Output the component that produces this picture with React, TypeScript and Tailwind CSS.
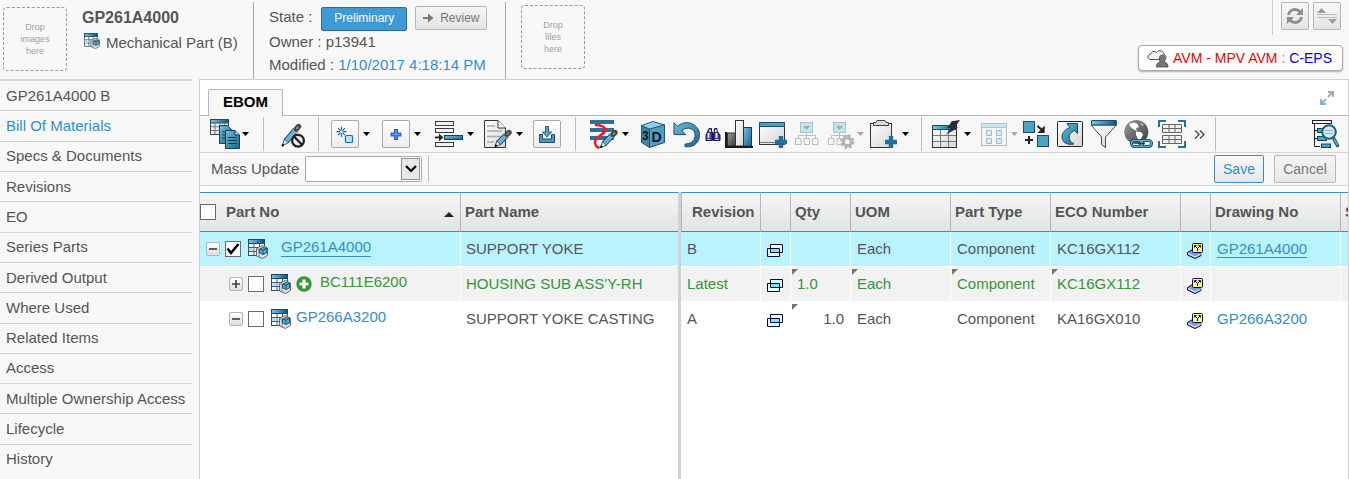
import React from "react";

type Kids = { children?: React.ReactNode };

function Defs() {
  return (
    <svg className="absolute h-0 w-0" aria-hidden="true">
      <defs>
        <linearGradient id="blue" x1="0" y1="0" x2="1" y2="1">
          <stop offset="0" stopColor="#6fc0e2" />
          <stop offset="1" stopColor="#1f6187" />
        </linearGradient>
        <linearGradient id="head" x1="0" y1="0" x2="1" y2="0">
          <stop offset="0" stopColor="#7cc8e8" />
          <stop offset="1" stopColor="#0d5378" />
        </linearGradient>
        <linearGradient id="paper" x1="0" y1="0" x2="1" y2="1">
          <stop offset="0" stopColor="#ffffff" />
          <stop offset="1" stopColor="#d6d6d6" />
        </linearGradient>
        <linearGradient id="dark" x1="0" y1="0" x2="1" y2="1">
          <stop offset="0" stopColor="#9a9a9a" />
          <stop offset="1" stopColor="#3c3c3c" />
        </linearGradient>
      </defs>
    </svg>
  );
}

function Glyph({ children }: Kids) {
  return (
    <svg viewBox="0 0 28 28" className="block h-7 w-7 overflow-visible" fill="none" aria-hidden="true">
      {children}
    </svg>
  );
}

function Pencil({ x1, y1, x2, y2 }: { x1: number; y1: number; x2: number; y2: number }) {
  const dx = x2 - x1;
  const dy = y2 - y1;
  const at = (t: number) => `${x1 + dx * t} ${y1 + dy * t}`;
  return (
    <g>
      <path
        d={`M${x1} ${y1}L${x1 + dx * 0.28 - 2} ${y1 + dy * 0.28 - 2}L${x1 + dx * 0.28 + 2} ${y1 + dy * 0.28 + 2}Z`}
        fill="#d9e4ea"
        stroke="#1c2f3a"
        strokeWidth="0.800"
      />
      <path d={`M${at(0.25)}L${at(0.82)}`} stroke="#1b4357" strokeWidth="6" />
      <path d={`M${at(0.27)}L${at(0.74)}`} stroke="#65b4da" strokeWidth="4.200" />
      <path d={`M${at(0.74)}L${at(0.84)}`} stroke="#eeeeee" strokeWidth="5" />
      <path d={`M${at(0.86)}L${at(1)}`} stroke="#4a4446" strokeWidth="5.400" strokeLinecap="round" />
      <path d={`M${at(0.9)}L${at(0.96)}`} stroke="#8d8587" strokeWidth="2" strokeLinecap="round" />
      <circle cx={x1 + 0.8} cy={y1 - 0.8} r="1.200" fill="#111" />
    </g>
  );
}

function Plus({ x, y }: { x: number; y: number }) {
  return <path d={`M${x - 6} ${y}H${x + 6}M${x} ${y - 6}V${y + 6}`} stroke="#23709b" strokeWidth="4.400" />;
}

function CopyTables() {
  return (
    <Glyph>
      <rect x="0.500" y="-0.500" width="18" height="15" fill="url(#paper)" stroke="#444" />
      <rect x="0.500" y="-0.500" width="18" height="3.500" fill="url(#head)" stroke="#2a4a5c" />
      <path d="M5 3V14M10 3V14M14.500 3V14M1 6.700H18M1 10.500H18" stroke="#777" />
      <path d="M9.500 5.500H17.500L21.500 9.500V23.500H9.500Z" fill="url(#blue)" stroke="#134560" />
      <path d="M12 12H18M12 15H18M12 18H18" stroke="#134560" />
      <path d="M15.500 10.500H25L29.500 15V28.500H15.500Z" fill="url(#blue)" stroke="#0d3c55" />
      <path d="M25 10.500V15H29.500" fill="#a5dcf2" stroke="#0d3c55" />
      <path d="M18 17.500H26.500M18 20.500H26.500M18 23.500H26.500" stroke="#0b3146" />
    </Glyph>
  );
}

function PencilOff() {
  return (
    <Glyph>
      <Pencil x1={2} y1={26} x2={18.5} y2={6.5} />
      <circle cx="18" cy="20.700" r="5.900" fill="#eee" stroke="#222" strokeWidth="2.300" />
      <path d="M14 16.500L22 24.700" stroke="#222" strokeWidth="2.300" />
    </Glyph>
  );
}

function NewItem() {
  return (
    <Glyph>
      <path d="M10.500 6.500V17M5.300 11.700H15.700M7 8.200L14 15.200M14 8.200L7 15.200" stroke="#1a6bb0" strokeWidth="1.200" />
      <circle cx="10.500" cy="11.700" r="1.500" fill="#d9eefa" />
      <rect x="14.500" y="15.500" width="7" height="7" rx="1" fill="#b5e4f7" stroke="#1a6bb0" strokeWidth="1.200" />
    </Glyph>
  );
}

function AddItem() {
  return (
    <Glyph>
      <path d="M8.500 14.500H19.500M14 9V20" stroke="#2564c0" strokeWidth="4" />
      <path d="M9.500 14.500H18.500M14 10V19" stroke="#5d95e0" strokeWidth="1.600" />
    </Glyph>
  );
}

function InsertRow() {
  return (
    <Glyph>
      <g fill="#f2f2f2" stroke="#3a3a3a">
        <rect x="0.500" y="1.500" width="18" height="4" />
        <rect x="0.500" y="8.500" width="18" height="4" />
        <rect x="0.500" y="22.500" width="18" height="4" />
      </g>
      <path d="M0 17.400H5" stroke="#222" strokeWidth="1.800" />
      <path d="M4 13.600L8.300 17.400L4 21.200Z" fill="#222" />
      <rect x="9.500" y="15.500" width="18" height="4" fill="url(#blue)" stroke="#12415a" />
    </Glyph>
  );
}

function EditNote() {
  return (
    <Glyph>
      <path d="M0.500 0.500H14L21.500 8V27.500H0.500Z" fill="url(#paper)" stroke="#333" />
      <path d="M14 0.500V8H21.500" fill="#fff" stroke="#333" />
      <path d="M3 6H11M3 11H18M3 16.500H17M3 22H10" stroke="#aaa" strokeWidth="1.700" />
      <Pencil x1={11} y1={26.5} x2={25} y2={12.5} />
    </Glyph>
  );
}

function Download() {
  return (
    <Glyph>
      <path d="M6.500 14.500H9.500V19H18.500V14.500H21.500V22.500H6.500Z" fill="#5197b8" stroke="#154e70" />
      <path d="M12.500 6.500H15.500V12H18.500L14 17L9.500 12H12.500Z" fill="#5ba5c9" stroke="#154e70" strokeWidth="0.900" />
    </Glyph>
  );
}

function Redline() {
  return (
    <Glyph>
      <path d="M0 2H24M0 10H24M0 18H24" stroke="#2d7296" strokeWidth="4" />
      <path d="M5 5C12 5 16 7 14.800 11C13.500 15 5 17 5 22C5 26 6.500 27 9.500 28" stroke="#f8171b" strokeWidth="2.600" />
      <Pencil x1={10.5} y1={27.5} x2={25} y2={12.5} />
    </Glyph>
  );
}

function Cube3D() {
  return (
    <Glyph>
      <path d="M13.700 1.500L2.500 5.500V22.500L10.500 27.500L25.500 22.500V4.800Z" fill="#3b86a8" />
      <path d="M13.700 1.500L2.500 5.500L10.500 9L25.500 4.800Z" fill="#8fd0ea" />
      <path d="M10.500 9L25.500 4.800V22.500L10.500 27.500Z" fill="#4da0c4" />
      <path d="M13.700 1.500L2.500 5.500V22.500L10.500 27.500L25.500 22.500V4.800ZM2.500 5.500L10.500 9V27.500M10.500 9L25.500 4.800" stroke="#123f56" strokeWidth="0.800" />
      <text x="3" y="20" fontSize="12" fontWeight="bold" fill="#111">3</text>
      <text x="12.500" y="22" fontSize="14" fontWeight="bold" fill="#111">D</text>
    </Glyph>
  );
}

function Undo() {
  return (
    <Glyph>
      <path
        d="M1 2.800L4.500 6.300C9 2.500 14.500 1.500 19.500 4C26 7.300 28 14 25.500 20C23 25.500 18 27.300 12 26.700V24C17.500 24 21.500 21 22 16.500C22.500 11.500 19.500 8.500 15.500 8.200C12.500 8 10.500 9 9 10.800L12.800 14.600H1Z"
        fill="url(#blue)"
        stroke="#174f6c"
      />
    </Glyph>
  );
}

function Binoculars() {
  return (
    <svg viewBox="0 0 16 28" className="block h-7 w-4" fill="none" aria-hidden="true">
      <path d="M4 8.500H6.500V11L7.500 13V20.500H1V15L3 11ZM9.500 8.500H12V11L15 15V20.500H8.500V13L9.500 11Z" fill="#3b3b86" stroke="#15155c" />
      <path d="M5 9.500V12M10.800 9.500V12" stroke="#fff" strokeWidth="1.500" />
      <path d="M3.500 13V18M11.500 13V18" stroke="#e8e8f4" strokeWidth="2" />
      <path d="M2 19.500H5.500M10 19.500H14" stroke="#c6c6e8" />
    </svg>
  );
}

function BarChart() {
  return (
    <Glyph>
      <rect x="2.500" y="13" width="8" height="13" fill="url(#dark)" stroke="#333" />
      <rect x="10.500" y="0.500" width="8" height="25.500" fill="url(#paper)" stroke="#333" />
      <rect x="18.500" y="7.500" width="8" height="18.500" fill="url(#blue)" stroke="#123f56" />
      <path d="M1 12V27H28" stroke="#1c1c1c" strokeWidth="2" />
    </Glyph>
  );
}

function WindowAdd() {
  return (
    <Glyph>
      <rect x="0.500" y="2.500" width="25" height="22" fill="url(#paper)" stroke="#333" />
      <rect x="0.500" y="2.500" width="25" height="4" fill="#4c9fc5" stroke="#174f6c" />
      <path d="M1 22.500H16" stroke="#777" />
      <Plus x={22} y={22} />
    </Glyph>
  );
}

function Hierarchy() {
  return (
    <Glyph>
      <rect x="7.500" y="2.500" width="12" height="10" fill="#c9e3ee" stroke="#a9c3cf" />
      <path d="M10 6H17L13.500 10Z" fill="#8eb0bf" />
      <path d="M13.500 12.500V18.500M5.500 18.500V15.500H22.500V18.500" stroke="#bdbdbd" />
      <path d="M2.500 18.500H8V24.500H2.500ZM11 18.500H16.500V24.500H11ZM19.500 18.500H25V24.500H19.500Z" fill="#f5f5f5" stroke="#bdbdbd" />
    </Glyph>
  );
}

function HierarchyGear() {
  return (
    <Glyph>
      <rect x="8.500" y="2.500" width="12" height="10" fill="#c9e3ee" stroke="#a9c3cf" />
      <path d="M11 6H18L14.500 10Z" fill="#8eb0bf" />
      <path d="M14.500 12.500V18M6.500 18V15.500H23" stroke="#bdbdbd" />
      <path d="M3.500 18.500H9V24.500H3.500ZM12 18.500H17.500V24.500H12Z" fill="#f5f5f5" stroke="#bdbdbd" />
      <circle cx="22.300" cy="21.700" r="6" stroke="#b2b2b2" strokeWidth="2.500" strokeDasharray="2.600 2.110" />
      <circle cx="22.300" cy="21.700" r="4" fill="#f5f5f5" stroke="#b2b2b2" strokeWidth="3" />
    </Glyph>
  );
}

function ClipboardAdd() {
  return (
    <Glyph>
      <rect x="0.500" y="3.500" width="21" height="24" fill="url(#paper)" stroke="#333" />
      <path d="M3.500 2.500H6L7 0.500H15L16 2.500H18.500V5.500H3.500Z" fill="#d8d8d8" stroke="#444" />
      <Plus x={21} y={22} />
    </Glyph>
  );
}

function TableBolt() {
  return (
    <Glyph>
      <rect x="0.500" y="5.500" width="24" height="22" fill="url(#paper)" stroke="#333" />
      <rect x="0.500" y="5.500" width="24" height="4" fill="url(#head)" stroke="#174f6c" />
      <path d="M8.500 10V27M16.500 10V27M1 15.500H24M1 21.500H24" stroke="#777" />
      <path d="M28 0L19.700 1.300L15.500 8H19L14 14.500L26.500 7.500H22.800Z" fill="#2b2b2b" />
    </Glyph>
  );
}

function TileGrid() {
  return (
    <Glyph>
      <rect x="2.500" y="3.500" width="25" height="22" fill="#f3f5f6" stroke="#bababa" />
      <rect x="2.500" y="3.500" width="25" height="4" fill="#cde6f0" stroke="#a9c3cf" />
      <path d="M7.500 10.500H12.500V15.500H7.500ZM17.500 10.500H22.500V15.500H17.500ZM7.500 18.500H12.500V23.500H7.500ZM17.500 18.500H22.500V23.500H17.500Z" fill="#d5edf6" stroke="#9dbccb" />
    </Glyph>
  );
}

function MoveBlock() {
  return (
    <Glyph>
      <rect x="1.500" y="1.500" width="11" height="11" fill="#4ea2c8" stroke="#154e6c" />
      <rect x="15.500" y="15.500" width="11" height="11" fill="#4ea2c8" stroke="#154e6c" />
      <path d="M15.500 6L20.500 10.500" stroke="#222" strokeWidth="2" />
      <path d="M22.700 5.500V13H15.500Z" fill="#222" />
      <path d="M3 20H11M7 16V24" stroke="#222" strokeWidth="2" />
    </Glyph>
  );
}

function ShareArrow() {
  return (
    <Glyph>
      <rect x="1.500" y="1.500" width="25" height="25" rx="1" fill="url(#paper)" stroke="#222" />
      <path
        d="M11 3.500H21.500V13.500L18.500 10.500C14.500 12.500 13 14.500 13.200 17.500C13.500 20.500 15 22.500 18 24C11.500 25.500 6 22.500 6 17C6 12.500 9 9.500 14 7.500Z"
        fill="url(#blue)"
        stroke="#154e6c"
      />
    </Glyph>
  );
}

function Funnel() {
  return (
    <Glyph>
      <path d="M1 5L11.500 17V24.500L15.500 27.500V17L26.500 5Z" fill="url(#paper)" stroke="#444" />
      <rect x="1.500" y="0.500" width="25" height="4.500" rx="0.500" fill="url(#head)" stroke="#15506f" />
    </Glyph>
  );
}

function GlobeLink() {
  return (
    <Glyph>
      <circle cx="12.300" cy="12" r="12" fill="url(#dark)" />
      <path d="M5 4L10 2.500L13.500 4L15 7L12 8L13 10.500L10.500 10L6.500 7Z" fill="#fff" />
      <path d="M12 11.500L17 12L19 14.500L17 19H14L12 15Z" fill="#fff" />
      <path d="M16 2.500L19.500 4.500L18.500 6Z" fill="#ddd" />
      <rect x="7.500" y="20.500" width="11" height="6" rx="3" stroke="#123f56" strokeWidth="3" />
      <rect x="16.500" y="20.500" width="11" height="6" rx="3" stroke="#123f56" strokeWidth="3" />
      <path d="M10.500 20.500H15.500A3 3 0 0 1 15.500 26.500H10.500A3 3 0 0 1 10.500 20.500M19.500 20.500H24.500A3 3 0 0 1 24.500 26.500H19.500A3 3 0 0 1 19.500 20.500" stroke="#62b1d6" strokeWidth="1.300" />
      <path d="M14 23.500H21" stroke="#123f56" strokeWidth="1.600" />
    </Glyph>
  );
}

function FrameTables() {
  return (
    <Glyph>
      <path d="M1 7V1H8M20 1H27V7M27 21V27H20M8 27H1V21" stroke="#2d7296" strokeWidth="2" />
      <path d="M4.500 4.500H23.500V12.500H4.500ZM4.500 8.500H23.500M11 4.500V12.500M17 4.500V12.500" fill="#f1f1f1" stroke="#666" />
      <path d="M4.500 15.500H23.500V23.500H4.500ZM4.500 19.500H23.500M11 15.500V23.500M17 15.500V23.500" fill="#f1f1f1" stroke="#666" />
    </Glyph>
  );
}

function SearchTree() {
  return (
    <Glyph>
      <path d="M2.500 4V26.500H8M2.500 10.500H6M2.500 18.500H6" stroke="#222" />
      <rect x="0.500" y="0.500" width="19" height="3" fill="#f4f4f4" stroke="#222" />
      <rect x="5.500" y="8.500" width="9" height="4" fill="#4ea2c8" stroke="#12415a" />
      <rect x="5.500" y="16.500" width="9" height="4" fill="#4ea2c8" stroke="#12415a" />
      <rect x="9.500" y="24" width="9" height="3.500" fill="#4ea2c8" stroke="#12415a" />
      <circle cx="17" cy="12" r="6.800" fill="#cdeaf6" stroke="#20607f" strokeWidth="2" />
      <path d="M13 10.500H21M13 13.500H21" stroke="#8fb9cb" />
      <path d="M21.500 18L25.500 25.500" stroke="#20607f" strokeWidth="3.600" strokeLinecap="round" />
      <path d="M22 18.500L25.500 25.200" stroke="#62b1d6" strokeWidth="1.300" />
    </Glyph>
  );
}

function PartIcon({ small = false }: { small?: boolean }) {
  return (
    <svg viewBox="0 0 20 20" className={small ? "block h-4 w-4 shrink-0" : "block h-5 w-5 shrink-0"} fill="none" aria-hidden="true">
      <rect x="0.500" y="0.500" width="16" height="16" fill="#fff" stroke="#2c536b" />
      <rect x="0.500" y="0.500" width="16" height="4" fill="url(#head)" stroke="#1d4960" />
      <path d="M1 8.500H16M1 12.500H16M6 5V16M11.500 5V16" stroke="#34617c" />
      <path d="M1 9H5.500V12H1Z" fill="#b5e1f2" />
      <path d="M8.500 9.500L14 6.500L19.500 9V16.500L14.500 19.500L8.500 17Z" fill="#e0e0e0" stroke="#666" />
      <path d="M8.500 9.500L11 10.500V18" stroke="#888" />
      <path d="M11.500 10L15 8.500L18.500 9.500V14L15 15.500L11.500 14Z" fill="#55aed6" stroke="#123f56" strokeWidth="0.800" />
      <path d="M11.500 10L15 11.200L18.500 9.500M15 11V15.500" stroke="#123f56" strokeWidth="0.800" />
    </svg>
  );
}

function WindowsIcon() {
  return (
    <svg viewBox="0 0 17 14" className="block h-3.5 w-[17px]" fill="none" aria-hidden="true">
      <path d="M3.500 0.500H15.500V8.500H3.500ZM0.500 4.500H12.500V12.500H0.500Z" fill="#e2fbff" />
      <rect x="3.500" y="4.500" width="9" height="4" fill="#7fe3fb" />
      <path d="M3.500 0.500H15.500V8.500H3.500ZM0.500 4.500H12.500V12.500H0.500Z" stroke="#0a0a3c" />
    </svg>
  );
}

function DrawingIcon() {
  return (
    <svg viewBox="0 0 17 17" className="block h-[17px] w-[17px]" fill="none" aria-hidden="true">
      <path d="M0.500 9.500L5.500 6.500L14 10.500V12.500L8 15.500L0.500 12Z" fill="#7f9ce0" stroke="#0a0a3c" />
      <path d="M1 10.500L8 14L14.500 10.500" stroke="#fff" strokeWidth="0.900" />
      <rect x="5.500" y="0.500" width="10" height="9" rx="1" fill="#fbf48a" stroke="#0a0a3c" />
      <path d="M10.500 8V5.500L8 3M10.500 5.500L13 3M7.500 4.500V2.500H9.500M11.500 2.500H13.500V4.500" stroke="#0a0a3c" />
    </svg>
  );
}

function Caret({ muted = false }: { muted?: boolean }) {
  return (
    <svg viewBox="0 0 7 4" className="block h-1 w-[7px]" aria-hidden="true">
      <path d="M0 0H7L3.500 4Z" fill={muted ? "#a5a5a5" : "#000"} />
    </svg>
  );
}

type ToolProps = { label: string; space: string; icon: React.ReactNode; boxed?: boolean; menu?: boolean; muted?: boolean };

function Tool({ label, space, icon, boxed, menu, muted }: ToolProps) {
  return (
    <div className={`flex shrink-0 items-center gap-1 ${space}`}>
      <button
        type="button"
        aria-label={label}
        className={boxed ? "rounded-xs bg-gradient-to-b from-white to-[#ececec] outline outline-1 -outline-offset-1 outline-[#a9a9a9]" : ""}
      >
        {icon}
      </button>
      {menu && (
        <button type="button" aria-label={`${label} menu`}>
          <Caret muted={muted} />
        </button>
      )}
    </div>
  );
}

function Rule({ space }: { space: string }) {
  return <div className={`h-[34px] w-px shrink-0 bg-[#bdbdbd] ${space}`} />;
}

function Toolbar() {
  return (
    <div className="box-content flex h-9 items-center border-t border-[#b4b6ba] bg-[#f7f7f7]">
      <Tool label="Copy tables" space="ml-2.5" icon={<CopyTables />} menu />
      <Rule space="ml-3.5" />
      <Tool label="Disable editing" space="ml-4" icon={<PencilOff />} />
      <Rule space="ml-2.5" />
      <Tool label="New item" space="ml-3" icon={<NewItem />} boxed menu />
      <Tool label="Add item" space="ml-3" icon={<AddItem />} boxed menu />
      <Tool label="Insert row" space="ml-3.5" icon={<InsertRow />} menu />
      <Tool label="Edit note" space="ml-2.5" icon={<EditNote />} menu />
      <Tool label="Download" space="ml-2.5" icon={<Download />} boxed />
      <Rule space="ml-3.5" />
      <Tool label="Redline" space="ml-3.5" icon={<Redline />} menu />
      <Tool label="3D view" space="ml-2.5" icon={<Cube3D />} />
      <Tool label="Undo" space="ml-1.5" icon={<Undo />} />
      <Tool label="Find" space="ml-1" icon={<Binoculars />} />
      <Tool label="Chart" space="ml-1" icon={<BarChart />} />
      <Tool label="New window" space="ml-1.5" icon={<WindowAdd />} />
      <Tool label="Hierarchy" space="ml-1.5" icon={<Hierarchy />} />
      <Tool label="Hierarchy settings" space="ml-1" icon={<HierarchyGear />} menu muted />
      <Tool label="Add to clipboard" space="ml-1.5" icon={<ClipboardAdd />} menu />
      <Rule space="ml-3" />
      <Tool label="Quick table" space="ml-2.5" icon={<TableBolt />} menu />
      <Tool label="Tiles" space="ml-2" icon={<TileGrid />} menu muted />
      <Tool label="Move block" space="ml-1" icon={<MoveBlock />} />
      <Tool label="Open" space="ml-1.5" icon={<ShareArrow />} />
      <Tool label="Filter" space="ml-1.5" icon={<Funnel />} />
      <Tool label="Web link" space="ml-1.5" icon={<GlobeLink />} />
      <Tool label="Frame tables" space="ml-1.5" icon={<FrameTables />} />
      <Tool
        label="More tools"
        space="ml-2"
        icon={
          <svg viewBox="0 0 11 9" className="block h-[9px] w-[11px]" fill="none" aria-hidden="true">
            <path d="M1 0.500L5 4.500L1 8.500M6 0.500L10 4.500L6 8.500" stroke="#444" strokeWidth="1.300" />
          </svg>
        }
      />
      <Rule space="ml-2.5" />
      <Tool label="Search structure" space="ml-auto mr-2" icon={<SearchTree />} />
    </div>
  );
}

function Check({ label, checked = false }: { label: string; checked?: boolean }) {
  return (
    <span className="relative block h-4 w-4 shrink-0">
      <input type="checkbox" aria-label={label} defaultChecked={checked} className="peer block h-4 w-4 appearance-none border border-[#6b6b6b] bg-white" />
      <svg viewBox="0 0 16 16" className="pointer-events-none absolute inset-0 hidden h-4 w-4 peer-checked:block" fill="none" aria-hidden="true">
        <path d="M2.500 7.500L6 12L13.500 3" stroke="#000" strokeWidth="2.500" />
      </svg>
    </span>
  );
}

function Toggle({ open }: { open: boolean }) {
  return (
    <button type="button" aria-label={open ? "Collapse" : "Expand"} className="h-3.5 w-3.5 shrink-0 rounded-xs border border-[#b5b5b5] bg-gradient-to-b from-white to-[#dedede]">
      <svg viewBox="0 0 12 12" className="block h-3 w-3" aria-hidden="true">
        <path d={open ? "M2 6H10" : "M2 6H10M6 2V10"} stroke="#444" strokeWidth="1.700" />
      </svg>
    </button>
  );
}

type Part = { id: string; name: string; rev: string; qty: string; eco: string; drawing: string; tone: string; bg: string; selected?: boolean; added?: boolean };

const parts: Part[] = [
  { id: "GP261A4000", name: "SUPPORT YOKE", rev: "B", qty: "", eco: "KC16GX112", drawing: "GP261A4000", tone: "text-[#555]", bg: "bg-[#b9f3ff]", selected: true },
  { id: "BC111E6200", name: "HOUSING SUB ASS'Y-RH", rev: "Latest", qty: "1.0", eco: "KC16GX112", drawing: "", tone: "text-[#349637]", bg: "bg-[#f2f2f2]", added: true },
  { id: "GP266A3200", name: "SUPPORT YOKE CASTING", rev: "A", qty: "1.0", eco: "KA16GX010", drawing: "GP266A3200", tone: "text-[#555]", bg: "bg-white" },
];

const headRow = "h-10 bg-gradient-to-b from-[#f4f6f7] to-[#e2e4e3] text-left";
const headEdge = "border-y border-y-[#368ec4] font-bold whitespace-nowrap";
const headCell = "border-y border-r border-y-[#368ec4] border-r-[#b4b6ba] pl-1 font-bold whitespace-nowrap";
const cell = "border-r border-b border-white pl-1.5 whitespace-nowrap";

function Notch() {
  return <span className="absolute top-0.5 left-px h-1.5 w-1.5 bg-[#777] [clip-path:polygon(0_0,100%_0,0_100%)]" />;
}

function NameTable() {
  return (
    <table className="w-[478px] shrink-0 table-fixed border-separate border-spacing-0 self-start text-[15px] leading-5">
      <colgroup>
        <col className="w-[261px]" />
        <col />
      </colgroup>
      <thead>
        <tr className={headRow}>
          <th className="border-y border-r border-y-[#368ec4] border-r-[#b4b6ba] pr-1.5 font-bold">
            <div className="flex items-center gap-2.5">
              <Check label="Select all" />
              <span>Part No</span>
              <svg viewBox="0 0 10 5" className="mt-1 ml-auto h-[5px] w-2.5" aria-hidden="true">
                <path d="M5 0L10 5H0Z" fill="#222" />
              </svg>
            </div>
          </th>
          <th className={`pl-1 ${headEdge}`}>Part Name</th>
        </tr>
      </thead>
      <tbody>
        {parts.map((p, i) => (
          <tr key={p.id} className={`h-[35px] ${p.bg} ${p.tone}`}>
            <td className="border-r border-b border-white">
              <div className={`flex items-center ${i === 0 ? "pl-1.5" : "pl-[29px]"}`}>
                <Toggle open={!p.added} />
                <span className="ml-[5px]"><Check label={`Select ${p.id}`} checked={p.selected} /></span>
                <span className="ml-[7px]"><PartIcon /></span>
                {p.added && (
                  <svg viewBox="0 0 16 16" className="ml-[5px] h-4 w-4" aria-hidden="true">
                    <circle cx="8" cy="8" r="7.700" fill="#349637" />
                    <path d="M3.500 8H12.500M8 3.500V12.500" stroke="#fff" strokeWidth="3.200" />
                  </svg>
                )}
                <a
                  href="#part"
                  className={`mb-1 ${p.added ? "ml-2 text-[#349637]" : "text-[#368ec4]"} ${p.selected ? "ml-[13px] border-b border-[#368ec4] leading-[18px]" : p.added ? "" : "ml-[5px]"}`}
                >
                  {p.id}
                </a>
              </div>
            </td>
            <td className="border-b border-white pl-[5px] whitespace-nowrap">{p.name}</td>
          </tr>
        ))}
      </tbody>
    </table>
  );
}

function DetailTable() {
  return (
    <div className="min-w-0 flex-1 overflow-hidden">
      <table className="w-[720px] table-fixed border-separate border-spacing-0 text-[15px] leading-5">
        <colgroup>
          <col className="w-20" />
          <col className="w-[30px]" />
          <col className="w-[60px]" />
          <col className="w-[100px]" />
          <col className="w-[100px]" />
          <col className="w-[130px]" />
          <col className="w-[30px]" />
          <col className="w-[130px]" />
          <col />
        </colgroup>
        <thead>
          <tr className={headRow}>
            <th className="border border-[#b4b6ba] border-y-[#368ec4] pl-2.5 font-bold">Revision</th>
            <th className={headCell} />
            <th className={headCell}>Qty</th>
            <th className={headCell}>UOM</th>
            <th className={headCell}>Part Type</th>
            <th className={headCell}>ECO Number</th>
            <th className={headCell} />
            <th className={headCell}>Drawing No</th>
            <th className={`pl-1 ${headEdge}`}>S</th>
          </tr>
        </thead>
        <tbody>
          {parts.map((p) => (
            <tr key={p.id} className={`h-[35px] ${p.bg} ${p.tone}`}>
              <td className={cell}>{p.rev}</td>
              <td className={cell}><button type="button" aria-label="Open window" className="mt-1 block"><WindowsIcon /></button></td>
              <td className={`relative ${cell} ${p.added ? "" : "pr-1.5 text-right"}`}>{p.qty && <Notch />}{p.qty}</td>
              <td className={`relative ${cell}`}>{p.added && <Notch />}Each</td>
              <td className={`relative ${cell}`}>{p.added && <Notch />}Component</td>
              <td className={`relative ${cell}`}>{p.added && <Notch />}{p.eco}</td>
              <td className={cell}><button type="button" aria-label="Open drawing" className="mt-1 block"><DrawingIcon /></button></td>
              <td className={cell}>
                {p.drawing && (
                  <a href="#drawing" className={`inline-block text-[#368ec4] ${p.selected ? "border-b border-[#368ec4] leading-4" : ""}`}>{p.drawing}</a>
                )}
              </td>
              <td className="border-b border-white" />
            </tr>
          ))}
        </tbody>
      </table>
    </div>
  );
}

const navItems = [
  "GP261A4000 B", "Bill Of Materials", "Specs & Documents", "Revisions", "EO", "Series Parts", "Derived Output",
  "Where Used", "Related Items", "Access", "Multiple Ownership Access", "Lifecycle", "History",
];

function SideNav() {
  return (
    <nav className="w-48 shrink-0 border-t-2 border-[#d4d4d4]">
      <ul className="flex h-[393px] flex-col">
        {navItems.map((n, i) => (
          <li key={n} className={`flex flex-1 items-center pl-1.5 ${i < navItems.length - 1 ? "border-b border-[#d4d4d4]" : ""}`}>
            <a href="#nav" className={`whitespace-nowrap ${n === "Bill Of Materials" ? "text-[#2f8fd3]" : ""}`}>{n}</a>
          </li>
        ))}
      </ul>
    </nav>
  );
}

function DropBox({ what }: { what: string }) {
  return (
    <div className="flex h-16 w-16 shrink-0 flex-col items-center justify-center rounded-sm border border-dashed border-[#999] text-[9px] leading-3 text-[#a0a0a0]">
      <span>Drop</span>
      <span>{what}</span>
      <span>here</span>
    </div>
  );
}

function Header() {
  const square = "flex h-7 w-7 items-center justify-center rounded-xs border border-[#b4b6ba] bg-gradient-to-b from-[#f8f8f8] to-[#e4e4e4]";
  return (
    <header className="flex h-[79px] items-start">
      <div className="flex w-[253px] shrink-0 gap-[15px] pt-[7px] pl-[3px]">
        <DropBox what="images" />
        <div>
          <h1 className="text-base leading-[22px] font-bold">GP261A4000</h1>
          <p className="flex items-center gap-1.5 pl-0.5 leading-7 whitespace-nowrap">
            <span className="mb-1"><PartIcon small /></span>
            Mechanical Part (B)
          </p>
        </div>
      </div>
      <div className="mt-0.5 h-[77px] w-px shrink-0 bg-[#a8a8a8]" />
      <div className="w-[251px] shrink-0 pt-1.5 pl-[15px] whitespace-nowrap">
        <div className="flex h-[25px] items-center">
          <span className="mb-1">State :</span>
          <button type="button" className="ml-[9px] h-6 w-[86px] rounded-xs border border-[#2a6b98] bg-[#3d9ad6] pb-0.5 text-xs text-white">Preliminary</button>
          <button type="button" className="mb-0.5 ml-2 flex h-6 w-[72px] items-center justify-center gap-1.5 rounded-xs border border-[#b4b6ba] bg-gradient-to-b from-[#f5f5f5] to-[#e4e4e4] text-xs text-[#777]">
            <svg viewBox="0 0 11 10" className="h-2.5 w-[11px]" aria-hidden="true">
              <path d="M0 4H5V0.500L10.500 5L5 9.500V6H0Z" fill="#77797c" />
            </svg>
            Review
          </button>
        </div>
        <p className="leading-[22px]">Owner : p13941</p>
        <p className="leading-6">Modified : <span className="text-[#2f8fd3]">1/10/2017 4:18:14 PM</span></p>
      </div>
      <div className="mt-0.5 h-[77px] w-px shrink-0 bg-[#a8a8a8]" />
      <div className="pt-[5px] pl-[15px]"><DropBox what="files" /></div>
      <div className="ml-auto flex flex-col items-end pr-1.5">
        <div className="flex h-[35px] gap-1 border-l border-[#ccc] pt-0.5 pr-0.5 pl-2">
          <button type="button" aria-label="Refresh" className={square}>
            <svg viewBox="0 0 18 18" className="h-[18px] w-[18px]" fill="none" aria-hidden="true">
              <path d="M2.500 8C3 4.500 6 2.500 9 2.500C11.300 2.500 13 3.500 14.300 5M15.500 10C15 13.500 12 15.500 9 15.500C6.700 15.500 5 14.500 3.700 13" stroke="#8d8d8d" strokeWidth="2.800" />
              <path d="M17 1V8H10ZM1 17V10H8Z" fill="#8d8d8d" />
            </svg>
          </button>
          <button type="button" aria-label="Collapse header" className={square}>
            <svg viewBox="0 0 22 18" className="h-[18px] w-[22px]" aria-hidden="true">
              <path d="M5.500 1L10 6H1ZM16.500 17L12 12H21Z" fill="#a39d99" />
              <path d="M1 7.500H21M1 10.500H21" stroke="#bbb" />
            </svg>
          </button>
        </div>
        <button type="button" className="mt-2.5 flex h-[26px] items-center rounded-sm border border-[#aaa] bg-white pr-2.5 pl-2 text-sm whitespace-nowrap shadow-[0_1px_2px_rgba(0,0,0,0.3)]">
          <svg viewBox="0 0 22 19" className="mr-1 h-[19px] w-[22px]" aria-hidden="true">
            <path d="M4 10.500C0 10.500 0 5.500 3.500 5.500C4 2 8 1.500 9.500 3.500C12 0 17 2 17 5.500C20 6.500 19.500 10.500 17 10.500Z" fill="#f0f0f0" stroke="#555" />
            <path d="M9.500 18C9.500 14.500 11 13.500 13.500 13C11.500 11 12 6 15.300 6C18.600 6 19 11 17 13C19.500 13.500 21 14.500 21 18Z" fill="#777" stroke="#444" strokeWidth="0.800" />
          </svg>
          <span className="text-[#f00000]">AVM - MPV AVM</span>
          <span className="whitespace-pre text-[#888]"> : </span>
          <span className="text-[#0000f0]">C-EPS</span>
        </button>
      </div>
    </header>
  );
}

function MassUpdate() {
  return (
    <div className="box-content flex h-8 items-center border-y border-[#d4d4d4] bg-[#f7f7f7] pr-3 pl-[11px]">
      <label htmlFor="mass" className="mr-1.5 whitespace-nowrap">Mass Update</label>
      <div className="relative">
        <select id="mass" className="block h-[26px] w-[117px] appearance-none rounded-xs border border-[#aaa] bg-white">
          <option />
        </select>
        <span className="pointer-events-none absolute top-0.5 right-0.5 flex h-[22px] w-[19px] items-center justify-center border border-[#8f8f8f] bg-[#e9e9e9]">
          <svg viewBox="0 0 12 8" className="h-2 w-3" fill="none" aria-hidden="true">
            <path d="M1 1L6 6L11 1" stroke="#000" strokeWidth="2.200" />
          </svg>
        </span>
      </div>
      <div className="ml-1.5 h-[26px] w-px bg-[#bdbdbd]" />
      <button type="button" className="ml-auto h-7 w-[50px] rounded-xs border border-[#368ec4] bg-gradient-to-b from-[#f8f8f8] to-[#e6e8e8] text-sm text-[#368ec4]">Save</button>
      <button type="button" className="ml-2.5 h-7 w-[62px] rounded-xs border border-[#b4b6ba] bg-gradient-to-b from-[#f5f5f5] to-[#e6e8e8] text-sm text-[#777]">Cancel</button>
    </div>
  );
}

export default function App() {
  return (
    <div className="flex min-h-screen flex-col overflow-hidden bg-[#f8f8f8] font-['Liberation_Sans',Arial,sans-serif] text-[15px] leading-5 text-[#555]">
      <Defs />
      <Header />
      <div className="flex flex-1 gap-[7px]">
        <SideNav />
        <main className="flex min-w-0 flex-1 flex-col border-x border-t border-[#d0d0d0] bg-white">
          <div className="flex h-[35px] items-end justify-between pr-3.5 pl-2">
            <button type="button" className="relative -mb-px h-[27px] w-[75px] rounded-t-xs border border-b-0 border-[#b4b6ba] bg-[#f7f7f7] pb-0.5 font-bold text-black">EBOM</button>
            <button type="button" aria-label="Maximize" className="mb-2.5">
              <svg viewBox="0 0 14 14" className="block h-3.5 w-3.5" fill="none" aria-hidden="true">
                <path d="M8 1H13V6M13 1L8 6" stroke="#a8a8a8" strokeWidth="1.900" />
                <path d="M1 8V13H6M1 13L6 8" stroke="#86b1cc" strokeWidth="1.900" />
              </svg>
            </button>
          </div>
          <Toolbar />
          <MassUpdate />
          <div className="flex flex-1 pt-1.5">
            <NameTable />
            <div className="w-[3px] shrink-0 bg-[#cfd1d2]" />
            <DetailTable />
          </div>
        </main>
      </div>
    </div>
  );
}
